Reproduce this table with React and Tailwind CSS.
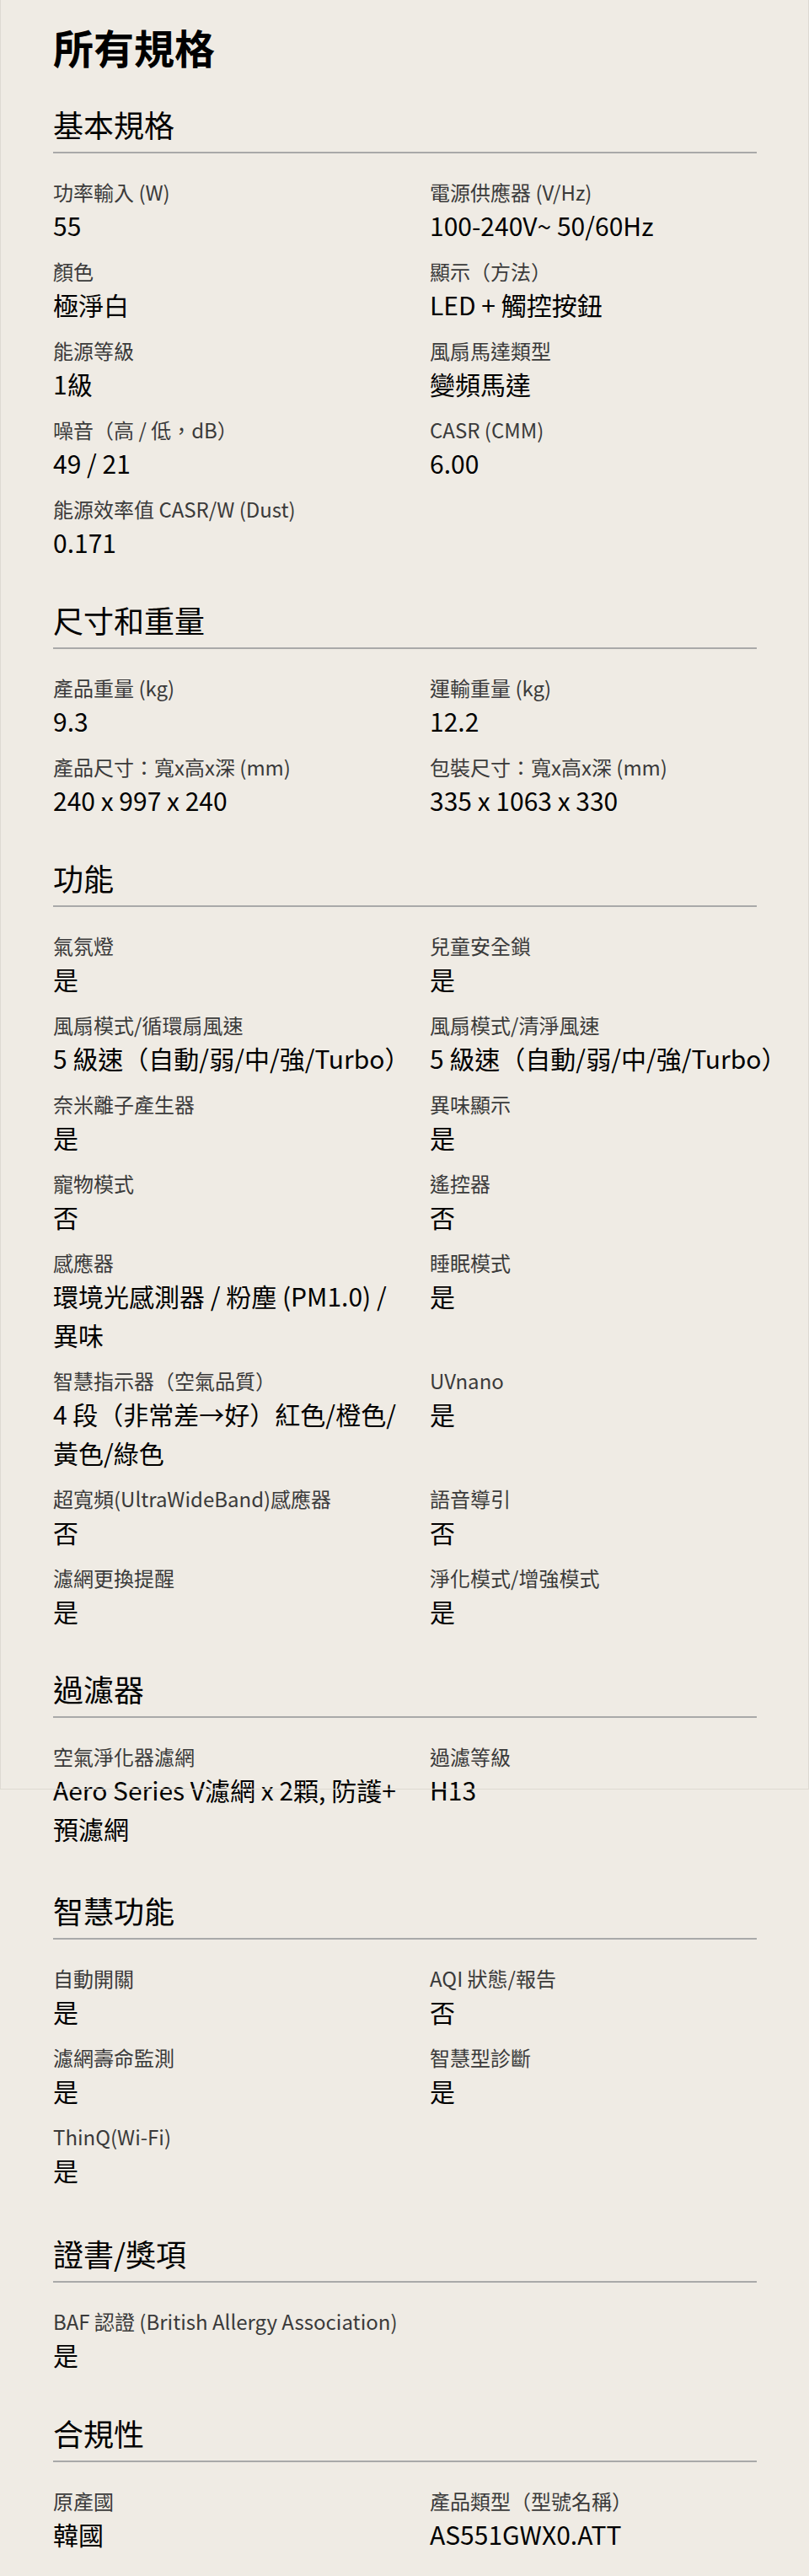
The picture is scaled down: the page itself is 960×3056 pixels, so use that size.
import React from "react"

// multi-line values are given as arrays, one entry per line
const sections = [
    {
        title: "基本規格",
        gap: "mt-[47px]",
        items: [
            ["功率輸入 (W)", "55"],
            ["電源供應器 (V/Hz)", "100-240V~ 50/60Hz"],
            ["顏色", "極淨白"],
            ["顯示（方法）", "LED + 觸控按鈕"],
            ["能源等級", "1級"],
            ["風扇馬達類型", "變頻馬達"],
            ["噪音（高 / 低，dB）", "49 / 21"],
            ["CASR (CMM)", "6.00"],
            ["能源效率值 CASR/W (Dust)", "0.171"],
        ],
    },
    {
        title: "尺寸和重量",
        gap: "mt-[47px]",
        items: [
            ["產品重量 (kg)", "9.3"],
            ["運輸重量 (kg)", "12.2"],
            ["產品尺寸：寬x高x深 (mm)", "240 x 997 x 240"],
            ["包裝尺寸：寬x高x深 (mm)", "335 x 1063 x 330"],
        ],
    },
    {
        title: "功能",
        gap: "mt-[47px]",
        items: [
            ["氣氛燈", "是"],
            ["兒童安全鎖", "是"],
            ["風扇模式/循環扇風速", "5 級速（自動/弱/中/強/Turbo）"],
            ["風扇模式/清淨風速", "5 級速（自動/弱/中/強/Turbo）"],
            ["奈米離子產生器", "是"],
            ["異味顯示", "是"],
            ["寵物模式", "否"],
            ["遙控器", "否"],
            ["感應器", ["環境光感測器 / 粉塵 (PM1.0) /", "異味"]],
            ["睡眠模式", "是"],
            ["智慧指示器（空氣品質）", ["4 段（非常差→好）紅色/橙色/", "黃色/綠色"]],
            ["UVnano", "是"],
            ["超寬頻(UltraWideBand)感應器", "否"],
            ["語音導引", "否"],
            ["濾網更換提醒", "是"],
            ["淨化模式/增強模式", "是"],
        ],
    },
    {
        title: "過濾器",
        gap: "mt-[47px]",
        items: [
            ["空氣淨化器濾網", ["Aero Series V濾網 x 2顆, 防護+", "預濾網"]],
            ["過濾等級", "H13"],
        ],
    },
    {
        title: "智慧功能",
        gap: "mt-[52px]",
        items: [
            ["自動開關", "是"],
            ["AQI 狀態/報告", "否"],
            ["濾網壽命監測", "是"],
            ["智慧型診斷", "是"],
            ["ThinQ(Wi-Fi)", "是"],
        ],
    },
    {
        title: "證書/獎項",
        gap: "mt-[54px]",
        items: [["BAF 認證 (British Allergy Association)", "是"]],
    },
    {
        title: "合規性",
        gap: "mt-[48px]",
        items: [
            ["原產國", "韓國"],
            ["產品類型（型號名稱）", "AS551GWX0.ATT"],
        ],
    },
]

const SpecSection = ({ title, gap, items }) => {
    return (
        <section className={gap}>
            <h2 className="w-[835px] border-b-2 border-[#a9a9a9] pb-[11px] text-[36px] leading-[44px] font-normal text-black">
                {title}
            </h2>
            <div className="grid w-[897px] grid-cols-[440px_1fr] gap-x-[7px] gap-y-[16px] pt-[30px]">
                {items.map(([label, value]) => {
                    const lines = Array.isArray(value) ? value : [value]
                    return (
                        <div key={label}>
                            <p className="whitespace-nowrap text-[24px] leading-[32px] text-[#3a3a3a]">{label}</p>
                            {lines.map((line) => (
                                <p key={line} className="whitespace-nowrap text-[30px] leading-[46px] text-black">
                                    {line}
                                </p>
                            ))}
                        </div>
                    )
                })}
            </div>
        </section>
    )
}

export default function App() {
    return (
        <div
            className="relative min-h-screen bg-[#efebe4] px-[63px] pb-[27px]"
            style={{ fontFamily: '"Noto Sans CJK TC", "Noto Sans", sans-serif' }}
        >
            {/* faint panel edge seen in the capture */}
            <div className="pointer-events-none absolute left-0 top-0 h-[2123px] w-[960px] border-x border-b border-[#dedad2]" />

            <h1 className="-mb-[3px] pt-[29px] text-[48px] leading-[52px] font-bold text-black">所有規格</h1>

            {sections.map((s) => (
                <SpecSection key={s.title} {...s} />
            ))}
        </div>
    )
}
